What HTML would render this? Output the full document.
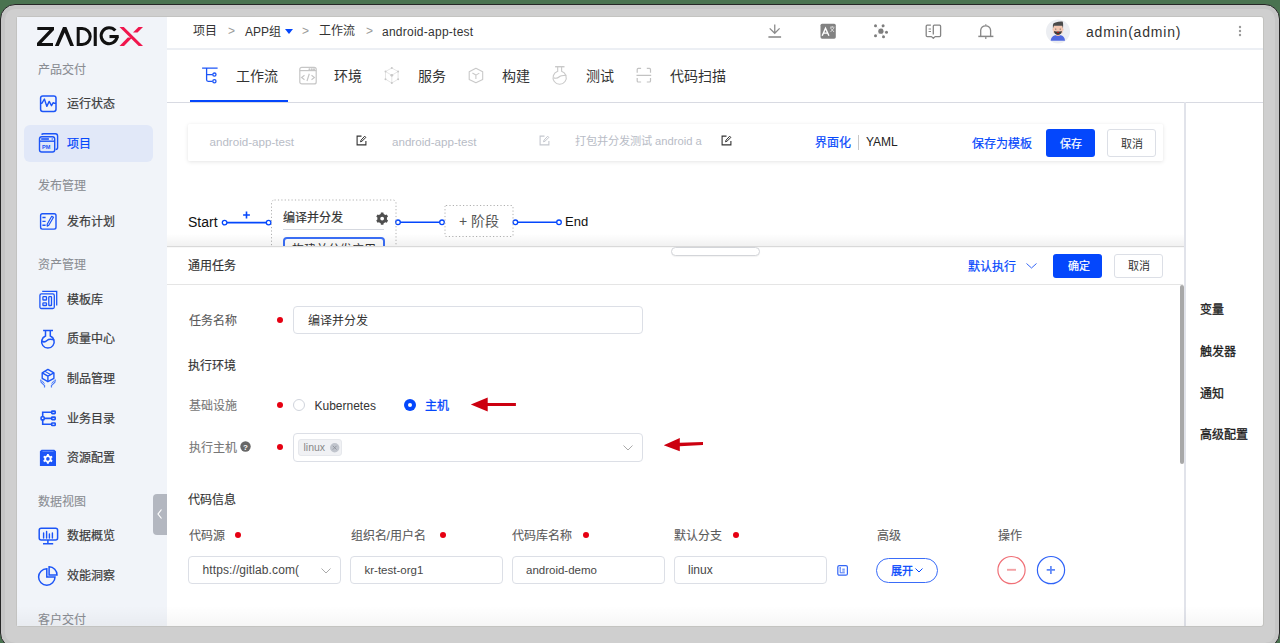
<!DOCTYPE html>
<html lang="zh-CN"><head><meta charset="utf-8">
<style>
*{box-sizing:border-box;margin:0;padding:0}
html,body{width:1280px;height:643px;overflow:hidden;background:#4a7350;font-family:"Liberation Sans",sans-serif;color:#333}
.a{position:absolute}
#frame{position:absolute;left:0;top:4px;width:1280px;height:644px;border-radius:15px;background:#cfcfcf;border:1.2px solid #262626;box-shadow:inset 0 0 0 4px #c6c6c6}
#app{position:absolute;left:17px;top:17px;width:1246px;height:609px;background:#fff;overflow:hidden;border-radius:2px;box-shadow:0 0 0 0.8px #c0c0bd}
.t{position:absolute;white-space:nowrap;line-height:1}
.grp{font-size:12px;color:#8a8d93;-webkit-text-stroke:0.1px currentColor}
.item{font-size:12px;color:#3b3b3b;-webkit-text-stroke:0.2px currentColor}
svg{position:absolute;overflow:visible}
.tab{font-size:14px;color:#333}
.lbl{font-size:12px;color:#5a5a5a;-webkit-text-stroke:0.1px currentColor}
.sec{font-size:12px;color:#333;-webkit-text-stroke:0.15px currentColor}
.inp{position:absolute;border:1px solid #dcdfe6;border-radius:4px;background:#fff}
.dot{position:absolute;width:6px;height:6px;border-radius:50%;background:#e60012}
.btnb{position:absolute;background:#0447fc;border-radius:3px}
.btnw{position:absolute;background:#fff;border:1px solid #dcdfe6;border-radius:3px}
</style></head>
<body>
<div id="frame"></div>
<div id="app"></div>

<!-- ============ SIDEBAR ============ -->
<div class="a" style="left:17px;top:17px;width:150px;height:609px;background:#f1f4f9"></div>
<div class="a" style="left:24px;top:125px;width:129px;height:37px;border-radius:6px;background:#e1e8f8"></div>

<!-- logo -->
<svg style="left:37px;top:27px" width="106" height="19" viewBox="0 0 106 19">
  <path fill="#111" d="M0.3 0H17L17 3L4.6 16H16V19H0V16L12.4 3H0.3Z"/>
  <path fill="#111" d="M17.9 19L26 0H29.4L37 19H33.2L27.7 5.5L21.7 19Z"/>
  <path fill="#111" fill-rule="evenodd" d="M39.7 0H45.2A9.5 9.5 0 0 1 45.2 19H39.7ZM42.7 3V16H45.2A6.5 6.5 0 0 0 45.2 3Z"/>
  <rect fill="#111" x="56.7" y="0" width="3.1" height="19"/>
  <path fill="none" stroke="#111" stroke-width="3.1" d="M78.3 3.6A8 8 0 1 0 80.1 9.6"/>
  <rect fill="#111" x="72.5" y="8" width="9.2" height="3.1"/>
  <path fill="#f0164d" d="M82.5 0H86.8L106 19H101.7Z"/>
  <path fill="#f0164d" d="M101.5 0H106L100.5 5.6H96Z"/>
  <path fill="#f0164d" d="M90.8 10.6H95.3L87 19H82.5Z"/>
</svg>

<div class="t grp" style="left:37.5px;top:63.5px">产品交付</div>
<div class="t item" style="left:67px;top:98px">运行状态</div>
<div class="t item" style="left:67px;top:138px;color:#0447fc">项目</div>
<div class="t grp" style="left:37.5px;top:180px">发布管理</div>
<div class="t item" style="left:67px;top:216px">发布计划</div>
<div class="t grp" style="left:37.5px;top:259px">资产管理</div>
<div class="t item" style="left:67px;top:294px">模板库</div>
<div class="t item" style="left:67px;top:333px">质量中心</div>
<div class="t item" style="left:67px;top:373px">制品管理</div>
<div class="t item" style="left:67px;top:413px">业务目录</div>
<div class="t item" style="left:67px;top:452px">资源配置</div>
<div class="t grp" style="left:37.5px;top:496px">数据视图</div>
<div class="t item" style="left:67px;top:530px">数据概览</div>
<div class="t item" style="left:67px;top:570px">效能洞察</div>
<div class="t grp" style="left:37.5px;top:614px">客户交付</div>

<!-- sidebar icons -->
<svg style="left:36px;top:90px" width="24" height="24" viewBox="0 0 24 24" fill="none" stroke="#1c55f7" stroke-width="1.5">
  <rect x="4.6" y="5.9" width="15.4" height="15.6" rx="2.2"/>
  <path d="M4.6 13.2H6L8.4 9L10.8 16.4L13.2 11.4L15.5 15.7L17.2 12.7L18 13.2H20" stroke-linejoin="round" stroke-width="1.4"/>
</svg>
<svg style="left:36px;top:130px" width="24" height="24" viewBox="0 0 24 24" fill="none" stroke="#1c55f7" stroke-width="1.4">
  <path d="M5.6 4.6Q6 3.7 7.6 3.7H19.4Q21.6 3.7 21.6 5.9V17.4Q21.6 19.4 19.6 19.5"/>
  <rect x="3.5" y="6.7" width="15.2" height="15.3" rx="2.2" fill="#e1e8f8"/>
  <path d="M3.5 11.2H18.7"/>
  <path d="M5.2 9H12.9" stroke-width="1.6"/>
  <circle cx="16.2" cy="9" r="0.7" fill="#1c55f7" stroke="none"/>
  <text x="6.1" y="18.6" font-size="5.6" font-family="Liberation Sans" font-weight="bold" fill="#1c55f7" stroke="none">PM</text>
</svg>
<svg style="left:36px;top:210px" width="24" height="24" viewBox="0 0 24 24" fill="none" stroke="#1c55f7" stroke-width="1.4">
  <rect x="4.6" y="3.7" width="15.4" height="15.4" rx="1.8"/>
  <path d="M6.4 7.5H9.6M6.4 11.4H9.6M6.4 15.3H9.6"/>
  <path d="M15.7 6.3L17.5 7.3L12.8 15.3L11.2 16.1L11.2 14.2Z" stroke-width="1.2" stroke-linejoin="round"/>
</svg>
<svg style="left:36px;top:288px" width="24" height="24" viewBox="0 0 24 24" fill="none" stroke="#1c55f7" stroke-width="1.3">
  <path d="M6.2 3.4H20.7V17.5"/>
  <rect x="3.9" y="5.9" width="14.4" height="14.6" rx="1.5"/>
  <rect x="6.9" y="8.7" width="3.6" height="3.3" rx="0.6"/>
  <rect x="6.9" y="14.9" width="3.6" height="2.6" rx="0.6"/>
  <rect x="12.8" y="8.7" width="2.7" height="8.8" rx="0.6"/>
</svg>
<svg style="left:36px;top:327px" width="24" height="24" viewBox="0 0 24 24" fill="none" stroke="#1c55f7" stroke-width="1.5">
  <path d="M7.1 3.5H17"/>
  <path d="M9.5 3.5V9A6.3 6.3 0 1 0 14.3 9V3.5"/>
  <path d="M5.5 14C7.5 15.3 9.5 15 11 13.5C12.5 12 14.5 11.8 18.1 12.8"/>
</svg>
<svg style="left:36px;top:366px" width="24" height="24" viewBox="0 0 24 24" fill="none" stroke="#1c55f7" stroke-width="1.4" stroke-linejoin="round">
  <path d="M11.9 3.4L17.9 6.9V12.3L11.9 15.7L6.2 12.3V6.9Z"/>
  <path d="M6.2 6.9L11.9 10.2L17.9 6.9M11.9 10.2V15.7"/>
  <path d="M9 5.4L14.8 8.8" stroke-width="1.1"/>
  <path d="M4.6 13.5L5.2 16.3L8.6 19.6L8.5 21.5M19.4 13.5L18.8 16.3L15.4 19.6L15.5 21.5" stroke-width="1.2" stroke="#4d7cf8"/>
  <path d="M5.8 14.5L8.5 17.5M18.2 14.5L15.5 17.5" stroke-width="1" stroke="#4d7cf8"/>
</svg>
<svg style="left:36px;top:406px" width="24" height="24" viewBox="0 0 24 24" fill="none" stroke="#1c55f7" stroke-width="1.6">
  <rect x="5.1" y="10.7" width="3.1" height="3.2" rx="0.8"/>
  <rect x="15.7" y="5.1" width="3.5" height="2.5" rx="0.6"/>
  <rect x="15.7" y="11.1" width="3.5" height="2.5" rx="0.6"/>
  <rect x="15.7" y="17" width="3.5" height="2.5" rx="0.6"/>
  <path d="M6.7 10.7V6.3H15.7M8.2 12.4H15.7M6.7 13.9V18.3H15.7"/>
</svg>
<svg style="left:36px;top:446px" width="24" height="24" viewBox="0 0 24 24">
  <path fill="#1c55f7" d="M3.9 5.3L5.6 3.7H18.3L20 5.3V20.1H3.9Z"/>
  <path d="M6.5 5.4H17.5" stroke="#7d9dfb" stroke-width="0.7"/>
  <path fill="#fff" d="M10.83 9.36 L11.01 7.98 L12.79 7.98 L12.97 9.36 L14.43 10.20 L15.72 9.67 L16.60 11.21 L15.50 12.06 L15.50 13.74 L16.60 14.59 L15.72 16.13 L14.43 15.60 L12.97 16.44 L12.79 17.82 L11.01 17.82 L10.83 16.44 L9.37 15.60 L8.08 16.13 L7.20 14.59 L8.30 13.74 L8.30 12.06 L7.20 11.21 L8.08 9.67 L9.37 10.20Z"/>
  <circle cx="11.9" cy="12.9" r="1.8" fill="#1c55f7"/>
</svg>
<svg style="left:36px;top:523px" width="24" height="24" viewBox="0 0 24 24" fill="none" stroke="#1c55f7" stroke-width="1.5">
  <rect x="3.2" y="5.2" width="18.4" height="11.8" rx="2"/>
  <path d="M7.6 10V15M10.6 8.5V15M13.4 11V15M16.4 10V15" stroke-linecap="round" stroke-width="1.4"/>
  <path d="M11.9 17V20.7M7 20.7H17.2"/>
</svg>
<svg style="left:36px;top:563px" width="24" height="24" viewBox="0 0 24 24" fill="none" stroke="#1c55f7" stroke-width="1.5">
  <path d="M10.8 5.8A8.2 8.2 0 1 0 19 14H10.8Z"/>
  <path d="M13.1 3.8A8 8 0 0 1 21 11.9H13.1Z"/>
</svg>
<!-- collapse handle -->
<div class="a" style="left:153px;top:494px;width:14px;height:41px;background:#b3b7c0;border-radius:4px 0 0 4px"></div>
<svg style="left:156px;top:508px" width="8" height="12" viewBox="0 0 8 12" fill="none" stroke="#fff" stroke-width="1.2"><path d="M5.5 1.5L2 6L5.5 10.5"/></svg>

<!-- ============ TOP BAR ============ -->
<div class="a" style="left:167px;top:48px;width:1096px;height:1.5px;background:#eceff4"></div>
<div class="t" style="left:193px;top:25px;font-size:12px;color:#333">项目</div>
<div class="t" style="left:228px;top:25px;font-size:12px;color:#999">&gt;</div>
<div class="t" style="left:245px;top:25.5px;font-size:12px;color:#333">APP组</div>
<svg style="left:285px;top:29px" width="8" height="5" viewBox="0 0 8 5"><path d="M0 0H8L4 5Z" fill="#0447fc"/></svg>
<div class="t" style="left:302px;top:25px;font-size:12px;color:#999">&gt;</div>
<div class="t" style="left:319px;top:25px;font-size:12px;color:#333">工作流</div>
<div class="t" style="left:366px;top:25px;font-size:12px;color:#999">&gt;</div>
<div class="t" style="left:382px;top:25.5px;font-size:12px;color:#333;letter-spacing:0.25px">android-app-test</div>

<svg style="left:763px;top:20px" width="24" height="24" viewBox="0 0 24 24" fill="none" stroke="#8c8c8c" stroke-width="1.3">
  <path d="M11.75 4.5V13.1M6.7 8.4L11.75 13.3L16.6 8.4"/><path d="M5.4 17H18.1" stroke-width="1.6"/>
</svg>
<svg style="left:816px;top:20px" width="24" height="24" viewBox="0 0 24 24">
  <rect x="4.5" y="3.7" width="15.3" height="15" rx="1.6" fill="#828282"/>
  <path d="M6.2 15.7L9.5 8.2L12.9 15.7M7.4 13.1H11.6" fill="none" stroke="#fff" stroke-width="1.4"/>
  <path d="M14 7.2H18.5M16.2 6V7.2M14.5 8L18 12M18 8L14.5 12" fill="none" stroke="#e8e8e8" stroke-width="0.8"/>
</svg>
<svg style="left:868px;top:20px" width="24" height="24" viewBox="0 0 24 24" fill="#7d7d7d">
  <path d="M7.5 5.8L12.9 11.2L15.1 5.8M18.5 12.3L12.9 11.2L15.5 16.8M7.5 15.7L12.9 11.2" fill="none" stroke="#dcdcdc" stroke-width="0.6"/>
  <circle cx="12.9" cy="11.2" r="2.6"/><circle cx="7.5" cy="5.8" r="1.5"/><circle cx="15.1" cy="5.8" r="1.5"/>
  <circle cx="18.5" cy="12.3" r="1.5"/><circle cx="15.5" cy="16.8" r="1.5"/><circle cx="7.5" cy="15.7" r="1.5"/>
</svg>
<svg style="left:921px;top:20px" width="24" height="24" viewBox="0 0 24 24" fill="none" stroke="#858585" stroke-width="1.3" stroke-linejoin="round">
  <path d="M9.9 5.2H6.2Q5.2 5.2 5.2 6.2V15.6Q5.2 16.6 6.2 16.6H10.5L12.3 18.3L14.1 16.6H18.6Q19.6 16.6 19.6 15.6V6.2Q19.6 5.2 18.6 5.2H13.3Q12.3 5.2 12.3 6.2V14.4"/>
  <path d="M7.6 9H10M7.6 11.5H10" stroke-width="1.2"/>
</svg>
<svg style="left:974px;top:20px" width="24" height="24" viewBox="0 0 24 24" fill="none" stroke="#888" stroke-width="1.3">
  <path d="M6.7 16.4V10.2A5 5 0 0 1 16.6 10.2V16.4"/><path d="M4.3 16.4H19.4" stroke-width="1.5"/><path d="M11.8 4.3V5.5M11.8 17V19" stroke-width="1.2"/>
</svg>
<!-- avatar -->
<svg style="left:1046px;top:19px" width="24" height="25" viewBox="0 0 24 25">
  <circle cx="12" cy="12.5" r="12" fill="#eceef2"/>
  <path d="M4.7 21.8Q5 17.2 9 16.2H15Q18.8 17.2 19 21.8Z" fill="#5069e0"/>
  <rect x="10.3" y="14.5" width="3.4" height="2.5" fill="#f0b8a0"/>
  <rect x="6.6" y="9.3" width="1.2" height="2.2" rx="0.6" fill="#eeb59e"/><rect x="16.2" y="9.3" width="1.2" height="2.2" rx="0.6" fill="#eeb59e"/>
  <rect x="7.2" y="6.5" width="9.6" height="8" rx="1.5" fill="#f4c7b1"/>
  <path d="M6.9 9.5V6Q7 3.8 9.5 3.4Q13 2.3 16.6 2.6Q17.4 4 17 9.5L16.2 6.8H8Z" fill="#4a4a4a"/>
  <circle cx="9.8" cy="10.1" r="0.55" fill="#555"/><circle cx="14.2" cy="10.1" r="0.55" fill="#555"/>
  <path d="M8 12Q8.2 15.8 12 15.9Q15.7 15.8 15.8 12L14 12.6H10Z" fill="#3d3d3d"/>
  <ellipse cx="12" cy="13.4" rx="0.9" ry="0.6" fill="#d01515"/>
</svg>
<div class="t" style="left:1086px;top:24.5px;font-size:14px;color:#333;letter-spacing:0.8px">admin(admin)</div>
<svg style="left:1238px;top:25px" width="4" height="12" viewBox="0 0 4 12" fill="#999">
  <circle cx="2" cy="2" r="1.2"/><circle cx="2" cy="6" r="1.2"/><circle cx="2" cy="10" r="1.2"/>
</svg>

<!-- ============ TAB BAR ============ -->
<div class="a" style="left:167px;top:101.5px;width:1096px;height:1px;background:#d8dae2"></div>
<div class="a" style="left:190px;top:100px;width:98px;height:2px;background:#0447fc"></div>
<svg style="left:201px;top:67px" width="17" height="17" viewBox="0 0 17 17" fill="none" stroke="#1c55f7" stroke-width="1.3">
  <path d="M1.1 1.2H16.6M5.6 1.2V12.8Q5.6 14.3 7.1 14.3H11.8M5.6 7.6H11.8"/><circle cx="13.4" cy="7.6" r="1.6" fill="#fff"/><circle cx="13.4" cy="14.3" r="1.6" fill="#fff"/>
</svg>
<div class="t tab" style="left:236px;top:69px">工作流</div>
<svg style="left:294px;top:62px" width="24" height="24" viewBox="0 0 24 24" fill="none" stroke="#c6c6c6" stroke-width="1.2">
  <rect x="5.8" y="5.3" width="16.4" height="16.6" rx="2"/><path d="M5.8 8.6H22.2"/>
  <circle cx="15.5" cy="7.2" r="0.45" fill="#c6c6c6"/><circle cx="17.8" cy="7.2" r="0.45" fill="#c6c6c6"/><circle cx="20" cy="7.2" r="0.45" fill="#c6c6c6"/>
  <path d="M10.5 13.2L7.6 15.5L10.5 17.8M17.5 13.2L20.4 15.5L17.5 17.8M15.3 11.8L13 19"/>
</svg>
<div class="t tab" style="left:334px;top:69px">环境</div>
<svg style="left:380px;top:62px" width="24" height="24" viewBox="0 0 24 24" fill="#c8c8c8" stroke="#dedede" stroke-width="0.8">
  <path d="M11.8 6L5.5 9.5V17.2L11.8 21L18.1 17.2V9.5Z M5.5 9.5L11.8 13.3L18.1 9.5 M11.8 13.3V21" fill="none"/>
  <g stroke="none"><circle cx="11.8" cy="6" r="1"/><circle cx="5.5" cy="9.5" r="1"/><circle cx="18.1" cy="9.5" r="1"/><circle cx="11.8" cy="13.3" r="1.4"/><circle cx="5.5" cy="17.2" r="1"/><circle cx="18.1" cy="17.2" r="1"/><circle cx="11.8" cy="21" r="1"/></g>
</svg>
<div class="t tab" style="left:418px;top:69px">服务</div>
<svg style="left:464px;top:63px" width="24" height="24" viewBox="0 0 24 24" fill="none" stroke="#c9c9c9" stroke-width="1.1" stroke-linejoin="round">
  <path d="M11.9 5.2L18.7 8.8V16.4L11.9 19.8L5.2 16.4V8.8Z"/><path d="M8.4 10.1L11.9 12.1L15.3 10.1M11.9 12.1V16"/>
</svg>
<div class="t tab" style="left:502px;top:69px">构建</div>
<svg style="left:548px;top:63px" width="24" height="24" viewBox="0 0 24 24" fill="none" stroke="#c9c9c9" stroke-width="1.1">
  <path d="M7.1 3.7H16.5" stroke-width="1.4"/><path d="M9.7 3.7V8.3A6.6 6.6 0 1 0 13.6 8.3V3.7"/><path d="M5.6 14.9C8 15.6 9.5 15.5 11 14C12.5 12.5 14 12.4 18.3 12.3"/>
</svg>
<div class="t tab" style="left:586px;top:69px">测试</div>
<svg style="left:632px;top:63px" width="24" height="24" viewBox="0 0 24 24" fill="none" stroke="#c2c2c2" stroke-width="1.2">
  <path d="M5.2 9.7V6.4Q5.2 5.4 6.2 5.4H9.1M14.8 5.4H17.5Q18.5 5.4 18.5 6.4V9.7M18.5 15V18Q18.5 19 17.5 19H14.8M9.1 19H6.2Q5.2 19 5.2 18V15M4.5 12.3H19.2"/>
</svg>
<div class="t tab" style="left:670px;top:69px">代码扫描</div>

<!-- right vertical line -->
<div class="a" style="left:1184px;top:102px;width:2px;height:524px;background:#e1e3ea"></div>

<!-- ============ HEADER CARD ============ -->
<div class="a" style="left:188px;top:124px;width:975px;height:37px;background:#fff;border-radius:1px;box-shadow:0 1px 4px rgba(0,0,0,0.1),0 0 1px rgba(0,0,0,0.06)"></div>
<div class="t" style="left:209.5px;top:135.8px;font-size:11.6px;color:#b8bcc6">android-app-test</div>
<svg style="left:356px;top:135px" width="12" height="12" viewBox="0 0 12 12" fill="none" stroke="#333" stroke-width="1.1">
  <path d="M5.5 1.1H1.1V9.9H9.9V6"/><path d="M8.7 1.2L9.9 2.4L6 6.2L4.5 6.8L5 5.2Z" stroke-width="1" stroke-linejoin="round"/>
</svg>
<div class="t" style="left:392px;top:135.8px;font-size:11.6px;color:#b8bcc6">android-app-test</div>
<svg style="left:539px;top:135px" width="12" height="12" viewBox="0 0 12 12" fill="none" stroke="#c4c7ce" stroke-width="1.1">
  <path d="M5.5 1.1H1.1V9.9H9.9V6"/><path d="M8.7 1.2L9.9 2.4L6 6.2L4.5 6.8L5 5.2Z" stroke-width="1" stroke-linejoin="round"/>
</svg>
<div class="t" style="left:575px;top:136px;font-size:11.2px;color:#b8bcc6">打包并分发测试 android a</div>
<svg style="left:721px;top:135px" width="12" height="12" viewBox="0 0 12 12" fill="none" stroke="#333" stroke-width="1.1">
  <path d="M5.5 1.1H1.1V9.9H9.9V6"/><path d="M8.7 1.2L9.9 2.4L6 6.2L4.5 6.8L5 5.2Z" stroke-width="1" stroke-linejoin="round"/>
</svg>
<div class="t" style="left:815px;top:136.5px;font-size:12px;color:#0447fc;-webkit-text-stroke:0.2px currentColor">界面化</div>
<div class="a" style="left:858px;top:135px;width:1px;height:15px;background:#c8c8c8"></div>
<div class="t" style="left:866px;top:136px;font-size:12px;color:#222">YAML</div>
<div class="t" style="left:972px;top:137.5px;font-size:12px;color:#0447fc;-webkit-text-stroke:0.2px currentColor">保存为模板</div>
<div class="btnb" style="left:1046px;top:129px;width:49px;height:28px"></div>
<div class="t" style="left:1059.5px;top:138.5px;font-size:11px;color:#fff;-webkit-text-stroke:0.2px currentColor">保存</div>
<div class="btnw" style="left:1107px;top:129px;width:49px;height:28px"></div>
<div class="t" style="left:1120.5px;top:138.5px;font-size:11px;color:#333">取消</div>

<!-- ============ PIPELINE ============ -->
<div class="t" style="left:188px;top:214.5px;font-size:14px;color:#111">Start</div>
<svg style="left:220px;top:210px" width="400" height="20" viewBox="0 0 400 20" fill="#fff" stroke="#0447fc" stroke-width="1.3">
  <path d="M4.6 12.6H48.6M178 12.3H222M295.4 12.3H339" fill="none" stroke-width="1.6"/>
  <circle cx="4.6" cy="12.6" r="2.3"/><circle cx="48.6" cy="12.6" r="2.3"/>
  <circle cx="178" cy="12.3" r="2.3"/><circle cx="222" cy="12.3" r="2.3"/>
  <circle cx="295.4" cy="12.3" r="2.3"/><circle cx="339" cy="12.3" r="2.3"/>
  <path d="M26.5 1.6V8.4M23.1 5H29.9" fill="none" stroke-width="1.6"/>
</svg>
<svg style="left:270px;top:199px" width="127" height="62" viewBox="0 0 127 62"><rect x="1.5" y="1" width="124.5" height="70" rx="3" fill="none" stroke="#b0b0b0" stroke-width="1" stroke-dasharray="1.2 2.2"/></svg>
<div class="t" style="left:282.5px;top:211.5px;font-size:12px;color:#333;-webkit-text-stroke:0.2px currentColor">编译并分发</div>
<svg style="left:376px;top:213px" width="13" height="12" viewBox="0 0 13 12"><path fill="#4f4f4f" fill-rule="evenodd" d="M4.64 0.94 L4.92 -0.48 L7.38 -0.48 L7.66 0.94 L9.43 1.96 L10.80 1.50 L12.03 3.62 L10.94 4.58 L10.94 6.62 L12.03 7.58 L10.80 9.70 L9.43 9.24 L7.66 10.26 L7.38 11.68 L4.92 11.68 L4.64 10.26 L2.87 9.24 L1.50 9.70 L0.27 7.58 L1.36 6.62 L1.36 4.58 L0.27 3.62 L1.50 1.50 L2.87 1.96Z M8.05 5.6A1.9 1.9 0 1 0 4.25 5.6A1.9 1.9 0 1 0 8.05 5.6Z"/></svg>
<div class="a" style="left:282.5px;top:228.5px;width:101.5px;height:1.2px;background:#d5d8df"></div>
<div class="a" style="left:282.5px;top:236.5px;width:102px;height:30px;border:2px solid #3b6ff7;border-radius:4px"></div>
<div class="t" style="left:292px;top:244px;font-size:12px;color:#333">构建并分发应用</div>
<svg style="left:444px;top:204px" width="70" height="33" viewBox="0 0 70 33"><rect x="1" y="1.5" width="68" height="31" rx="1" fill="none" stroke="#b0b0b0" stroke-width="1" stroke-dasharray="1.2 2.2"/></svg>
<div class="t" style="left:459px;top:213.5px;font-size:14px;color:#555">+ 阶段</div>
<div class="t" style="left:565px;top:215px;font-size:13px;color:#111">End</div>

<!-- ============ DRAWER ============ -->
<div class="a" style="left:167px;top:234px;width:1017px;height:12px;background:linear-gradient(rgba(0,0,0,0),rgba(0,0,0,0.055))"></div>
<div class="a" style="left:167px;top:246px;width:1017px;height:380px;background:#fff;border-top:1px solid #d9d9d9;box-shadow:inset 0 1px 1px rgba(0,0,0,0.03)"></div>
<div class="a" style="left:671px;top:246.5px;width:89px;height:9.5px;border:1.2px solid #d3d5d9;border-radius:5px;background:#fff;box-shadow:0 1px 1px rgba(0,0,0,0.05)"></div>
<div class="t sec" style="left:188px;top:260px">通用任务</div>
<div class="t" style="left:968px;top:260.5px;font-size:12px;color:#0447fc;-webkit-text-stroke:0.2px currentColor">默认执行</div>
<svg style="left:1025.5px;top:262.5px" width="11" height="6" viewBox="0 0 11 6" fill="none" stroke="#2a5ef8" stroke-width="0.95"><path d="M0.5 0.5L5.5 5L10.5 0.5"/></svg>
<div class="btnb" style="left:1053px;top:254px;width:49px;height:24px"></div>
<div class="t" style="left:1067.5px;top:261px;font-size:11px;color:#fff;-webkit-text-stroke:0.2px currentColor">确定</div>
<div class="btnw" style="left:1114px;top:254px;width:49px;height:24px"></div>
<div class="t" style="left:1128px;top:261px;font-size:11px;color:#333">取消</div>
<div class="a" style="left:167px;top:284px;width:1016px;height:1px;background:#e5e5e5"></div>
<!-- scrollbar -->
<div class="a" style="left:1180px;top:285px;width:4px;height:179px;background:#a8a8a8;border-radius:2px"></div>

<div class="t lbl" style="left:188.5px;top:314.5px">任务名称</div>
<div class="dot" style="left:277px;top:316.5px"></div>
<div class="inp" style="left:293px;top:306px;width:350px;height:28px"></div>
<div class="t" style="left:307.5px;top:314.5px;font-size:12px;color:#333">编译并分发</div>

<div class="t sec" style="left:188px;top:360px">执行环境</div>

<div class="t lbl" style="left:188.5px;top:400px;color:#777">基础设施</div>
<div class="dot" style="left:277px;top:402px"></div>
<div class="a" style="left:293px;top:399px;width:12px;height:12px;border:1px solid #d0d4dc;border-radius:50%;background:#fff"></div>
<div class="t" style="left:314.5px;top:400px;font-size:12px;color:#333">Kubernetes</div>
<div class="a" style="left:404px;top:399px;width:12px;height:12px;border-radius:50%;background:#0447fc"></div>
<div class="a" style="left:408px;top:403px;width:4px;height:4px;border-radius:50%;background:#fff"></div>
<div class="t" style="left:425px;top:399.5px;font-size:12px;color:#0447fc;-webkit-text-stroke:0.3px currentColor">主机</div>
<svg style="left:466px;top:394px" width="56" height="22" viewBox="0 0 56 22"><path d="M4.8 10.5L21.7 3.5V9H49.9V12H21.7V17.5Z" fill="#cc0010"/></svg>

<div class="t lbl" style="left:188.5px;top:442px;color:#777">执行主机</div>
<svg style="left:240.3px;top:441px" width="11" height="11" viewBox="0 0 11 11"><circle cx="5.5" cy="5.5" r="5.2" fill="#676767"/><text x="5.5" y="8.6" text-anchor="middle" font-size="8" font-weight="bold" font-family="Liberation Sans" fill="#fff">?</text></svg>
<div class="dot" style="left:277px;top:444px"></div>
<div class="inp" style="left:293px;top:433px;width:350px;height:28.5px"></div>
<div class="a" style="left:298px;top:439px;width:44px;height:16.5px;background:#f0f1f4;border:1px solid #e6e8ec;border-radius:3px"></div>
<div class="t" style="left:303.5px;top:442px;font-size:10.5px;color:#888">linux</div>
<svg style="left:330px;top:443px" width="9.4" height="9.4" viewBox="0 0 10 10"><circle cx="5" cy="5" r="5" fill="#c0c4cc"/><path d="M3 3L7 7M7 3L3 7" stroke="#8d9199" stroke-width="0.9"/></svg>
<svg style="left:623px;top:445px" width="10" height="6" viewBox="0 0 10 6" fill="none" stroke="#aaa" stroke-width="1"><path d="M0.5 0.5L5 5L9.5 0.5"/></svg>
<svg style="left:656px;top:432px" width="56" height="22" viewBox="0 0 56 22"><path d="M7.7 13.3L23.8 5.9V10.7L47 10.1V13.1L23.8 14.2V19.2Z" fill="#cc0010"/></svg>

<div class="t sec" style="left:188px;top:493.5px">代码信息</div>

<div class="t lbl" style="left:188.5px;top:530px">代码源</div>
<div class="dot" style="left:235px;top:532px"></div>
<div class="t lbl" style="left:350.5px;top:530px">组织名/用户名</div>
<div class="dot" style="left:439.5px;top:532px"></div>
<div class="t lbl" style="left:512px;top:530px">代码库名称</div>
<div class="dot" style="left:583px;top:532px"></div>
<div class="t lbl" style="left:674px;top:530px">默认分支</div>
<div class="dot" style="left:732.5px;top:532px"></div>
<div class="t lbl" style="left:876.5px;top:530px">高级</div>
<div class="t lbl" style="left:997.5px;top:530px">操作</div>

<div class="inp" style="left:188px;top:556px;width:153px;height:28px"></div>
<div class="t" style="left:202.5px;top:564px;font-size:12px;color:#474747;letter-spacing:0.1px">https://gitlab.com(</div>
<svg style="left:321px;top:568px" width="10" height="6" viewBox="0 0 10 6" fill="none" stroke="#aaa" stroke-width="1"><path d="M0.5 0.5L5 5L9.5 0.5"/></svg>
<div class="inp" style="left:350px;top:556px;width:153px;height:28px"></div>
<div class="t" style="left:364.5px;top:564.5px;font-size:11.5px;color:#474747">kr-test-org1</div>
<div class="inp" style="left:512px;top:556px;width:153px;height:28px"></div>
<div class="t" style="left:526px;top:564.5px;font-size:11.5px;color:#474747">android-demo</div>
<div class="inp" style="left:674px;top:556px;width:153px;height:28px"></div>
<div class="t" style="left:688px;top:564px;font-size:12px;color:#474747">linux</div>
<svg style="left:837px;top:564.5px" width="11" height="11" viewBox="0 0 11 11" fill="none" stroke="#3366f5" stroke-width="1.2">
  <rect x="0.8" y="0.6" width="9.6" height="9.6" rx="1.5"/><path d="M3.2 2.8V7.8H7.8M5.3 4.2H7.8M5.3 6H7.8M2.5 2.8H4" stroke-width="0.9"/>
</svg>
<div class="a" style="left:876px;top:557.5px;width:62px;height:25px;border:1.2px solid #3a6cf8;border-radius:13px"></div>
<div class="t" style="left:890.5px;top:565.5px;font-size:11px;color:#0447fc;-webkit-text-stroke:0.3px currentColor">展开</div>
<svg style="left:915px;top:568px" width="8" height="5" viewBox="0 0 8 5" fill="none" stroke="#0447fc" stroke-width="1"><path d="M0.5 0.5L4 4L7.5 0.5"/></svg>
<svg style="left:993px;top:552px" width="76" height="36" viewBox="0 0 76 36">
  <circle cx="18.5" cy="18.1" r="13.6" fill="none" stroke="#f07077" stroke-width="1.2"/>
  <path d="M14 17.8H23" stroke="#f3a1a4" stroke-width="1.9"/>
  <circle cx="58" cy="18.1" r="13.6" fill="none" stroke="#2f63f7" stroke-width="1.2"/>
  <path d="M53.7 17.9H62M57.9 14V22" stroke="#5d87f8" stroke-width="1.7"/>
</svg>
<!-- ============ RIGHT PANEL ============ -->
<div class="t" style="left:1199.5px;top:304px;font-size:12px;color:#1a1a1a;-webkit-text-stroke:0.3px currentColor">变量</div>
<div class="t" style="left:1199.5px;top:346px;font-size:12px;color:#1a1a1a;-webkit-text-stroke:0.3px currentColor">触发器</div>
<div class="t" style="left:1199.5px;top:387.5px;font-size:12px;color:#1a1a1a;-webkit-text-stroke:0.3px currentColor">通知</div>
<div class="t" style="left:1199.5px;top:429px;font-size:12px;color:#1a1a1a;-webkit-text-stroke:0.3px currentColor">高级配置</div>

<div class="a" style="left:17px;top:606px;width:1246px;height:20px;background:linear-gradient(rgba(0,0,0,0),rgba(0,0,0,0.035))"></div>
</body></html>
